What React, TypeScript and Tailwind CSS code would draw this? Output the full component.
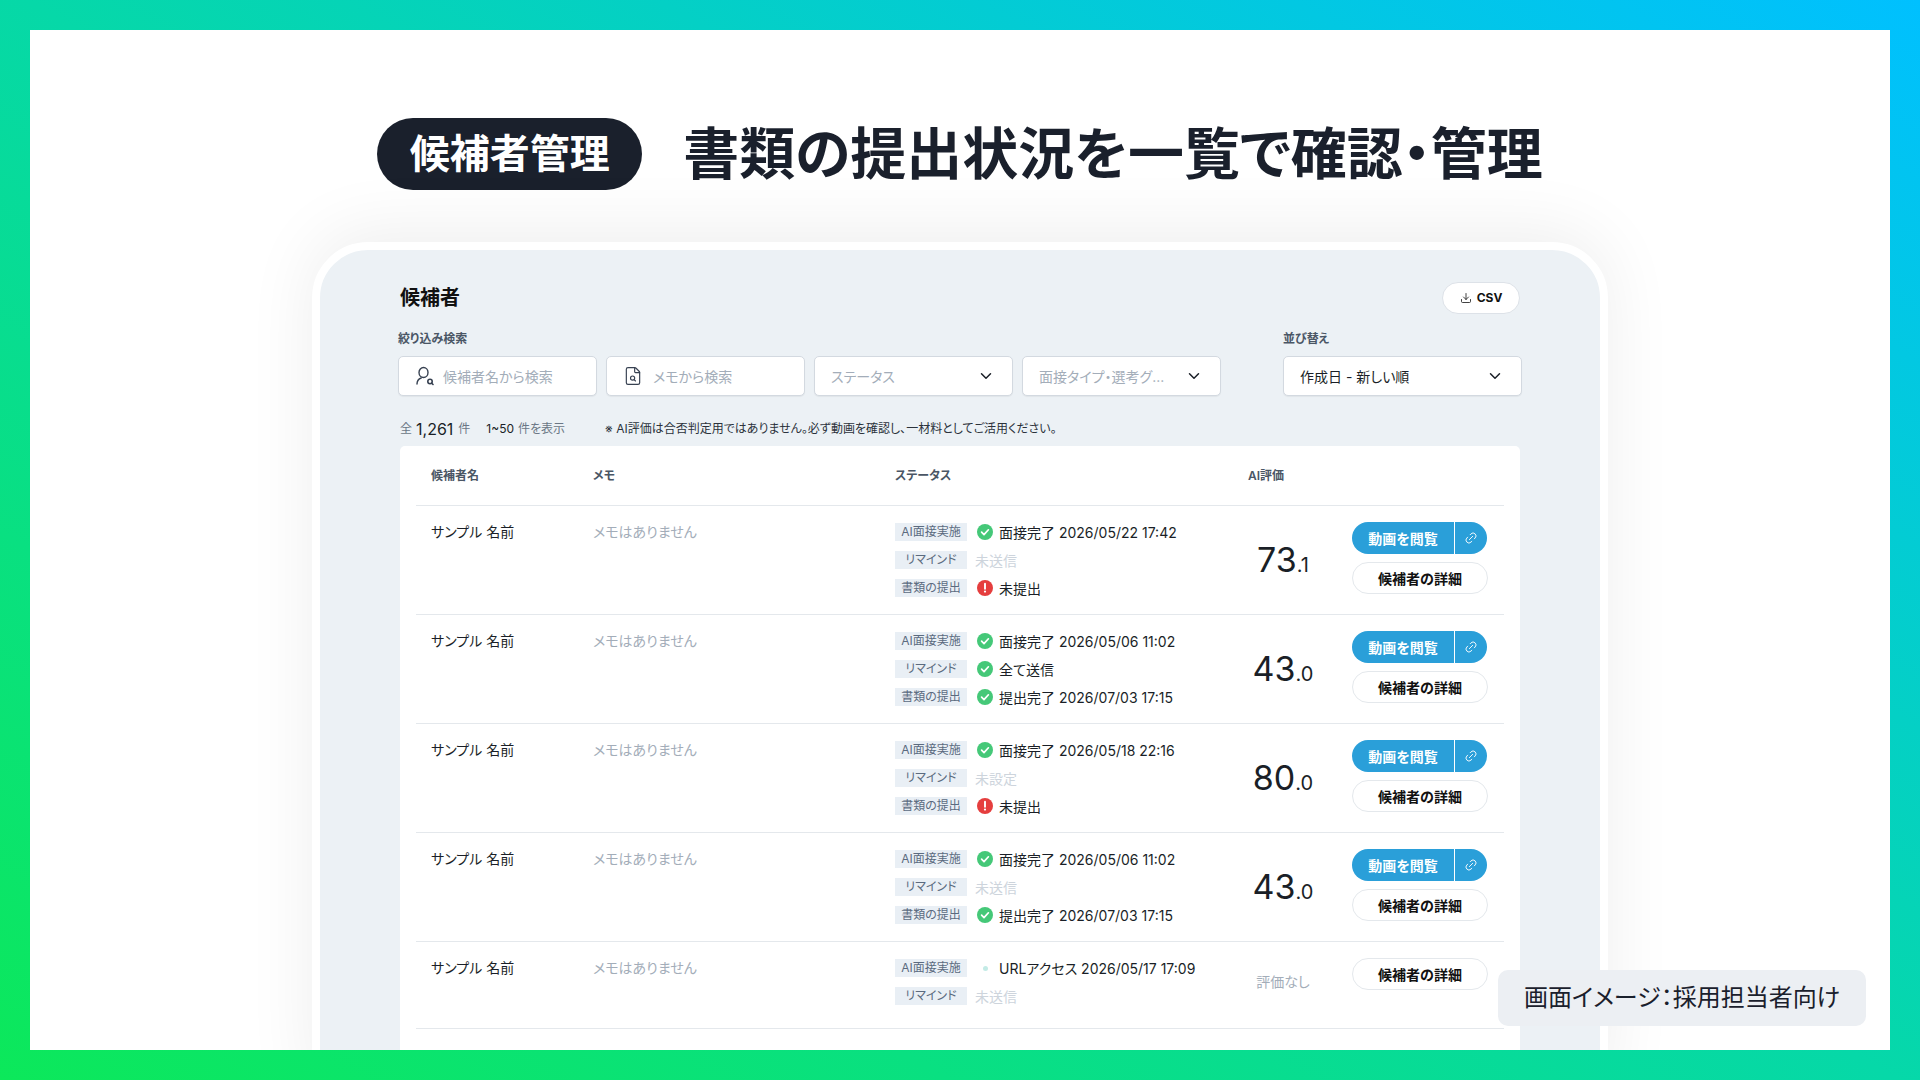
import React from 'react';
import { ChevronDown, Download, FileSearch, Link2 } from 'lucide-react';

type Status = { label: string; text: string; kind: 'ok' | 'alert' | 'none' | 'dot' };
type Candidate = { statuses: Status[]; score?: [string, string]; hasVideo: boolean };

const candidates: Candidate[] = [
  {
    statuses: [
      { label: 'AI面接実施', text: '面接完了 2026/05/22 17:42', kind: 'ok' },
      { label: 'リマインド', text: '未送信', kind: 'none' },
      { label: '書類の提出', text: '未提出', kind: 'alert' },
    ],
    score: ['73', '.1'],
    hasVideo: true,
  },
  {
    statuses: [
      { label: 'AI面接実施', text: '面接完了 2026/05/06 11:02', kind: 'ok' },
      { label: 'リマインド', text: '全て送信', kind: 'ok' },
      { label: '書類の提出', text: '提出完了 2026/07/03 17:15', kind: 'ok' },
    ],
    score: ['43', '.0'],
    hasVideo: true,
  },
  {
    statuses: [
      { label: 'AI面接実施', text: '面接完了 2026/05/18 22:16', kind: 'ok' },
      { label: 'リマインド', text: '未設定', kind: 'none' },
      { label: '書類の提出', text: '未提出', kind: 'alert' },
    ],
    score: ['80', '.0'],
    hasVideo: true,
  },
  {
    statuses: [
      { label: 'AI面接実施', text: '面接完了 2026/05/06 11:02', kind: 'ok' },
      { label: 'リマインド', text: '未送信', kind: 'none' },
      { label: '書類の提出', text: '提出完了 2026/07/03 17:15', kind: 'ok' },
    ],
    score: ['43', '.0'],
    hasVideo: true,
  },
  {
    statuses: [
      { label: 'AI面接実施', text: 'URLアクセス 2026/05/17 17:09', kind: 'dot' },
      { label: 'リマインド', text: '未送信', kind: 'none' },
    ],
    hasVideo: false,
  },
];

const UserSearchIcon = () => (
  <svg width="20" height="20" viewBox="0 0 20 20" fill="none" stroke="#374151" strokeWidth="1.4" strokeLinecap="round">
    <ellipse cx="8.5" cy="6.5" rx="4.5" ry="5" />
    <path d="M2 18c0-3.2 1.6-5 4.2-6" />
    <circle cx="15" cy="15.5" r="2.2" strokeWidth="1.6" />
    <path d="M16.8 17.3l1.2 1.2" strokeWidth="1.6" />
  </svg>
);

const StatusIcon = ({ kind }: { kind: Status['kind'] }) => {
  if (kind === 'ok') {
    return (
      <svg width="16" height="16" viewBox="0 0 16 16">
        <circle cx="8" cy="8" r="8" fill="#45c878" />
        <path d="M4.6 8.2l2.4 2.4 4.4-4.8" fill="none" stroke="#fff" strokeWidth="1.7" strokeLinecap="round" strokeLinejoin="round" />
      </svg>
    );
  }
  if (kind === 'alert') {
    return (
      <svg width="16" height="16" viewBox="0 0 16 16">
        <circle cx="8" cy="8" r="8" fill="#e53e3e" />
        <path d="M8 3.8v5" stroke="#fff" strokeWidth="1.9" strokeLinecap="round" />
        <circle cx="8" cy="11.6" r="1.1" fill="#fff" />
      </svg>
    );
  }
  return (
    <span className="flex h-4 w-4 items-center justify-center">
      <span className="h-[5px] w-[5px] rounded-full bg-[#c3ebe6]" />
    </span>
  );
};

const StatusRow = ({ status }: { status: Status }) => (
  <div className="flex h-[18px] items-center">
    <span className="flex h-[18px] w-[72px] items-center justify-center bg-[#e9eff5] text-[12px] text-[#5b6b7f]">
      {status.label}
    </span>
    {status.kind === 'none' ? (
      <span className="ml-2 text-[14px] text-[#cdd4dc]">{status.text}</span>
    ) : (
      <>
        <span className="ml-[10px]">
          <StatusIcon kind={status.kind} />
        </span>
        <span className="ml-[6px] text-[14px] text-[#1a1f27]">{status.text}</span>
      </>
    )}
  </div>
);

const Row = ({ candidate, last }: { candidate: Candidate; last: boolean }) => (
  <div
    className={`grid grid-cols-[162px_302px_353px_104px_136px] border-b border-[#e4e8ec] pl-[15px] pt-4 ${
      last ? 'pb-[23px]' : 'pb-[17px]'
    }`}
  >
    <div className="text-[14px] leading-5 text-[#1a1f27]">サンプル 名前</div>
    <div className="text-[14px] leading-5 text-[#a3adb9]">メモはありません</div>
    <div className="flex flex-col gap-[10px] pt-px">
      {candidate.statuses.map((status) => (
        <StatusRow key={status.label} status={status} />
      ))}
    </div>
    <div className="flex w-[70px] items-center justify-center">
      {candidate.score ? (
        <span className="leading-none text-[#1a1f27]">
          <span className="text-[34px]">{candidate.score[0]}</span>
          <span className="text-[20px]">{candidate.score[1]}</span>
        </span>
      ) : (
        <span className="text-[14px] text-[#a3adb9]">評価なし</span>
      )}
    </div>
    <div className="flex flex-col gap-2">
      {candidate.hasVideo && (
        <div className="flex h-8 w-[135px] overflow-hidden rounded-full bg-[#2a9fd9] text-white">
          <span className="flex w-[102px] items-center justify-center text-[14px] font-bold">動画を閲覧</span>
          <span className="flex flex-1 items-center justify-center border-l border-white">
            <Link2 className="h-[14px] w-[14px] -rotate-45" strokeWidth={1.5} />
          </span>
        </div>
      )}
      <div className="flex h-8 items-center justify-center rounded-full border border-[#e4e8ec] bg-white text-[14px] font-bold text-[#111]">
        候補者の詳細
      </div>
    </div>
  </div>
);

const FilterBox = ({ children, className }: { children: React.ReactNode; className: string }) => (
  <div className={`flex h-10 items-center rounded-[5px] border border-[#d3d9e0] bg-white text-[14px] shadow-[0_1px_1px_rgba(0,0,0,0.05)] ${className}`}>
    {children}
  </div>
);

export default function App() {
  return (
    <div className="h-[1080px] w-[1920px] overflow-hidden bg-[linear-gradient(30deg,#0ce85a_0%,#06d8a8_50%,#00c0ff_100%)] p-[30px] [font-family:Inter,'Noto_Sans_CJK_JP',sans-serif] [font-feature-settings:'palt']">
      <div className="relative flex h-[1020px] w-[1860px] flex-col items-center overflow-hidden bg-white pt-[88px]">
        {/* Heading */}
        <div className="flex h-[72px] items-center gap-[41px]">
          <div className="flex h-[72px] w-[265px] items-center justify-center rounded-full bg-[#1a202c] text-[40px] font-bold text-white">
            候補者管理
          </div>
          <h1 className="text-[56px] font-bold leading-none text-[#1a202c]">書類の提出状況を一覧で確認・管理</h1>
        </div>

        {/* Screen mock */}
        <div className="mt-[52px] w-[1296px] shrink-0 rounded-[56px] border-8 border-white bg-[#ecf1f5] px-20 pb-10 pt-8 shadow-[0_-10px_70px_rgba(0,0,0,0.07)]">
          <div className="flex items-center justify-between">
            <h2 className="text-[20px] font-bold text-[#111]">候補者</h2>
            <div className="flex h-8 w-[78px] items-center justify-center gap-[5px] rounded-full border border-[#dde2e8] bg-white text-[12px] font-bold text-[#111]">
              <Download className="h-3 w-3" strokeWidth={1.6} />
              CSV
            </div>
          </div>

          <div className="-mx-[2px] mt-[17px] flex justify-between">
            <div>
              <div className="mb-[9px] text-[12px] font-semibold leading-4 text-[#4a5665]">絞り込み検索</div>
              <div className="flex gap-[9px]">
                <FilterBox className="w-[199px] pl-4 text-[#a3adb9]">
                  <UserSearchIcon />
                  <span className="ml-[8px]">候補者名から検索</span>
                </FilterBox>
                <FilterBox className="w-[199px] pl-4 text-[#a3adb9]">
                  <FileSearch className="h-5 w-5 text-[#374151]" strokeWidth={1.4} />
                  <span className="ml-[10px]">メモから検索</span>
                </FilterBox>
                <FilterBox className="w-[199px] justify-between pl-4 pr-[17px] text-[#a3adb9]">
                  <span>ステータス</span>
                  <ChevronDown className="h-[18px] w-[18px] text-[#1a1f27]" strokeWidth={2} />
                </FilterBox>
                <FilterBox className="w-[199px] justify-between pl-4 pr-[17px] text-[#a3adb9]">
                  <span>面接タイプ・選考グ...</span>
                  <ChevronDown className="h-[18px] w-[18px] text-[#1a1f27]" strokeWidth={2} />
                </FilterBox>
              </div>
            </div>
            <div>
              <div className="mb-[9px] text-[12px] font-semibold leading-4 text-[#4a5665]">並び替え</div>
              <FilterBox className="w-[239px] justify-between pl-4 pr-[17px] text-[#1a1f27]">
                <span>作成日 - 新しい順</span>
                <ChevronDown className="h-[18px] w-[18px]" strokeWidth={2} />
              </FilterBox>
            </div>
          </div>

          <div className="mt-[22px] flex h-[22px] items-center text-[12px] text-[#6b7785]">
            <span>全</span>
            <span className="ml-[4px] text-[16px] text-[#1a1f27]">1,261</span>
            <span className="ml-[5px]">件</span>
            <span className="ml-4 text-[#1a1f27]">1~50</span>
            <span className="ml-[4px]">件を表示</span>
            <span className="ml-10 text-[#2b323b]">※ AI評価は合否判定用ではありません。必ず動画を確認し、一材料としてご活用ください。</span>
          </div>

          <div className="mt-[6px] rounded-t-[5px] bg-white px-4 pb-10">
            <div className="grid h-[60px] grid-cols-[162px_302px_353px_240px] items-center border-b border-[#e4e8ec] pl-[15px] text-[12px] font-semibold text-[#4a5665]">
              <span>候補者名</span>
              <span>メモ</span>
              <span>ステータス</span>
              <span>AI評価</span>
            </div>
            {candidates.map((candidate, i) => (
              <Row key={i} candidate={candidate} last={i === candidates.length - 1} />
            ))}
          </div>
        </div>

        <div className="absolute bottom-6 right-6 flex h-14 w-[368px] items-center justify-center rounded-[10px] bg-[#eceff3] text-[24px] text-[#1a202c]">
          画面イメージ：採用担当者向け
        </div>
      </div>
    </div>
  );
}
